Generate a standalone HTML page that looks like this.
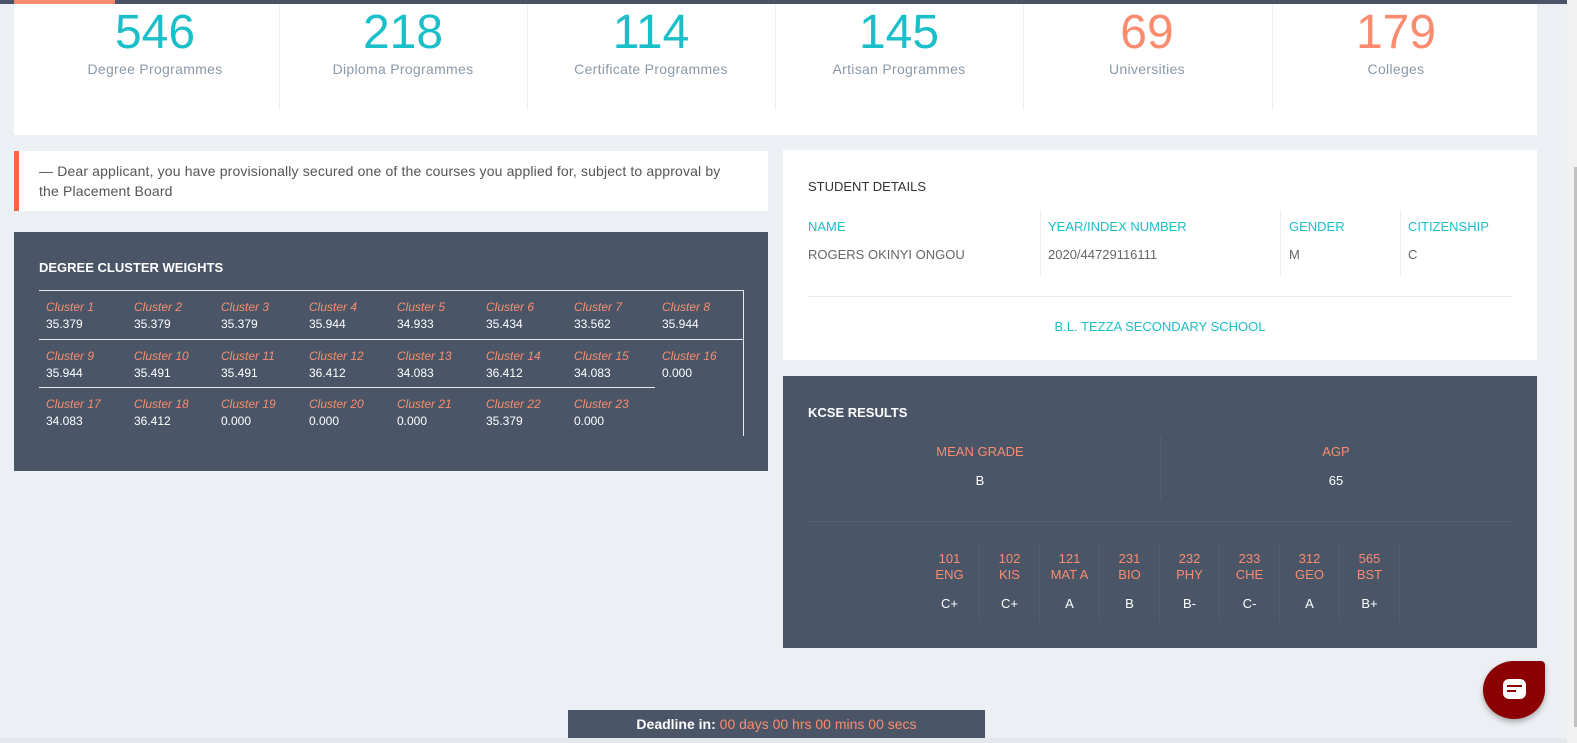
<!DOCTYPE html>
<html><head><meta charset="utf-8"><style>
*{margin:0;padding:0;box-sizing:border-box}
body{width:1577px;height:743px;overflow:hidden;background:#ecf0f4;font-family:"Liberation Sans",sans-serif;position:relative}
.abs{position:absolute}
.topbar{left:0;top:0;width:1567px;height:4px;background:#4b5366}
.topbar i{position:absolute;left:14px;top:0;width:101px;height:4px;background:#f98c6f}
.scroll{left:1567px;top:0;width:10px;height:743px;background:#f1f1f1}
.thumb{left:1574px;top:167px;width:3px;height:560px;background:#c1c1c1}
.card{background:#fff}
.dark{background:#4a5667}
.stat{position:absolute;top:4px;width:248px;height:106px;text-align:center}
.stat b{display:block;font-weight:normal;font-size:48px;line-height:54px;margin-top:2px;color:#1bbfc9}
.stat.o b{color:#f98c6f}
.stat span{display:block;font-size:14px;color:#8a99a8;margin-top:1px;letter-spacing:.3px}
.div{position:absolute;top:5px;width:1px;height:105px;background:#eceef0}
.cl{position:absolute;font-size:12px;color:#fff;line-height:17px}
.cl em{display:block;color:#f98c6f;font-size:12px}
.t{color:#1bbfc9;font-size:13px}
.v{color:#666;font-size:13px}
.sub{position:absolute;top:543px;width:60px;height:80px;text-align:center;border-right:1px solid #52606f;font-size:13px;color:#f98c6f;line-height:16px;padding-top:8px}
.sub b{display:block;color:#fff;font-weight:normal;margin-top:13px}
</style></head><body>
<div class="abs topbar"><i></i></div>
<div class="abs scroll"></div><div class="abs thumb"></div>

<div class="abs card" style="left:14px;top:4px;width:1523px;height:131px"></div>
<div class="stat" style="left:31px"><b>546</b><span>Degree Programmes</span></div>
<div class="stat" style="left:279px"><b>218</b><span>Diploma Programmes</span></div>
<div class="stat" style="left:527px"><b>114</b><span>Certificate Programmes</span></div>
<div class="stat" style="left:775px"><b>145</b><span>Artisan Programmes</span></div>
<div class="stat o" style="left:1023px"><b>69</b><span>Universities</span></div>
<div class="stat o" style="left:1272px"><b>179</b><span>Colleges</span></div>
<div class="div" style="left:279px"></div><div class="div" style="left:527px"></div><div class="div" style="left:775px"></div><div class="div" style="left:1023px"></div><div class="div" style="left:1272px"></div>

<div class="abs card" style="left:14px;top:151px;width:754px;height:60px;border-left:5px solid #f7663f;padding:10px 30px 0 20px;font-size:14px;color:#555;line-height:20px;letter-spacing:.15px">— Dear applicant, you have provisionally secured one of the courses you applied for, subject to approval by the Placement Board</div>

<div class="abs dark" style="left:14px;top:232px;width:754px;height:239px"></div>
<div class="abs" style="left:39px;top:260px;color:#fff;font-weight:bold;font-size:13px">DEGREE CLUSTER WEIGHTS</div>
<div class="abs" style="left:39px;top:290px;width:704px;height:1px;background:#e6e9ee"></div>
<div class="abs" style="left:39px;top:339px;width:704px;height:1px;background:#e6e9ee"></div>
<div class="abs" style="left:39px;top:387px;width:616px;height:1px;background:#e6e9ee"></div>
<div class="abs" style="left:743px;top:290px;width:1px;height:146px;background:#e6e9ee"></div>
<div class="cl" style="left:46px;top:299px"><em>Cluster 1</em>35.379</div>
<div class="cl" style="left:134px;top:299px"><em>Cluster 2</em>35.379</div>
<div class="cl" style="left:221px;top:299px"><em>Cluster 3</em>35.379</div>
<div class="cl" style="left:309px;top:299px"><em>Cluster 4</em>35.944</div>
<div class="cl" style="left:397px;top:299px"><em>Cluster 5</em>34.933</div>
<div class="cl" style="left:486px;top:299px"><em>Cluster 6</em>35.434</div>
<div class="cl" style="left:574px;top:299px"><em>Cluster 7</em>33.562</div>
<div class="cl" style="left:662px;top:299px"><em>Cluster 8</em>35.944</div>
<div class="cl" style="left:46px;top:348px"><em>Cluster 9</em>35.944</div>
<div class="cl" style="left:134px;top:348px"><em>Cluster 10</em>35.491</div>
<div class="cl" style="left:221px;top:348px"><em>Cluster 11</em>35.491</div>
<div class="cl" style="left:309px;top:348px"><em>Cluster 12</em>36.412</div>
<div class="cl" style="left:397px;top:348px"><em>Cluster 13</em>34.083</div>
<div class="cl" style="left:486px;top:348px"><em>Cluster 14</em>36.412</div>
<div class="cl" style="left:574px;top:348px"><em>Cluster 15</em>34.083</div>
<div class="cl" style="left:662px;top:348px"><em>Cluster 16</em>0.000</div>
<div class="cl" style="left:46px;top:396px"><em>Cluster 17</em>34.083</div>
<div class="cl" style="left:134px;top:396px"><em>Cluster 18</em>36.412</div>
<div class="cl" style="left:221px;top:396px"><em>Cluster 19</em>0.000</div>
<div class="cl" style="left:309px;top:396px"><em>Cluster 20</em>0.000</div>
<div class="cl" style="left:397px;top:396px"><em>Cluster 21</em>0.000</div>
<div class="cl" style="left:486px;top:396px"><em>Cluster 22</em>35.379</div>
<div class="cl" style="left:574px;top:396px"><em>Cluster 23</em>0.000</div>

<div class="abs card" style="left:783px;top:150px;width:754px;height:210px"></div>
<div class="abs" style="left:808px;top:179px;font-size:13px;color:#333">STUDENT DETAILS</div>
<div class="abs t" style="left:808px;top:219px">NAME</div>
<div class="abs t" style="left:1048px;top:219px">YEAR/INDEX NUMBER</div>
<div class="abs t" style="left:1289px;top:219px">GENDER</div>
<div class="abs t" style="left:1408px;top:219px">CITIZENSHIP</div>
<div class="abs v" style="left:808px;top:247px">ROGERS OKINYI ONGOU</div>
<div class="abs v" style="left:1048px;top:247px">2020/44729116111</div>
<div class="abs v" style="left:1289px;top:247px">M</div>
<div class="abs v" style="left:1408px;top:247px">C</div>
<div class="abs" style="left:1040px;top:210px;width:1px;height:66px;background:#eee"></div>
<div class="abs" style="left:1280px;top:210px;width:1px;height:66px;background:#eee"></div>
<div class="abs" style="left:1400px;top:210px;width:1px;height:66px;background:#eee"></div>
<div class="abs" style="left:808px;top:296px;width:704px;height:1px;background:#eee"></div>
<div class="abs t" style="left:783px;top:319px;width:754px;text-align:center">B.L. TEZZA SECONDARY SCHOOL</div>

<div class="abs dark" style="left:783px;top:376px;width:754px;height:272px"></div>
<div class="abs" style="left:808px;top:405px;color:#fff;font-weight:bold;font-size:13px">KCSE RESULTS</div>
<div class="abs" style="left:808px;top:444px;width:344px;text-align:center;color:#f98c6f;font-size:13px">MEAN GRADE</div>
<div class="abs" style="left:1160px;top:444px;width:352px;text-align:center;color:#f98c6f;font-size:13px">AGP</div>
<div class="abs" style="left:808px;top:473px;width:344px;text-align:center;color:#fff;font-size:13px">B</div>
<div class="abs" style="left:1160px;top:473px;width:352px;text-align:center;color:#fff;font-size:13px">65</div>
<div class="abs" style="left:1160px;top:436px;width:1px;height:64px;background:#52606f"></div>
<div class="abs" style="left:808px;top:521px;width:704px;height:1px;background:#52606f"></div>
<div class="sub" style="left:920px">101<br>ENG<b>C+</b></div>
<div class="sub" style="left:980px">102<br>KIS<b>C+</b></div>
<div class="sub" style="left:1040px">121<br>MAT A<b>A</b></div>
<div class="sub" style="left:1100px">231<br>BIO<b>B</b></div>
<div class="sub" style="left:1160px">232<br>PHY<b>B-</b></div>
<div class="sub" style="left:1220px">233<br>CHE<b>C-</b></div>
<div class="sub" style="left:1280px">312<br>GEO<b>A</b></div>
<div class="sub" style="left:1340px">565<br>BST<b>B+</b></div>

<div class="abs dark" style="left:568px;top:710px;width:417px;height:28px;text-align:center;font-size:14px;line-height:28px;color:#fff"><b>Deadline in:</b> <span style="color:#f98c6f">00 days 00 hrs 00 mins 00 secs</span></div>
<div class="abs" style="left:0;top:738px;width:1567px;height:5px;background:#e4e8ec"></div>

<div class="abs" style="left:1483px;top:661px;width:62px;height:58px;background:#8b0000;border-radius:50% 4px 50% 50%;box-shadow:0 3px 6px rgba(0,0,0,.3)"></div>
<div class="abs" style="left:1503px;top:679px;width:23px;height:20px;background:#fff;border-radius:6px"></div>
<div class="abs" style="left:1507px;top:685px;width:15px;height:2px;background:#8b0000"></div>
<div class="abs" style="left:1507px;top:690px;width:9px;height:2px;background:#8b0000"></div>
</body></html>
